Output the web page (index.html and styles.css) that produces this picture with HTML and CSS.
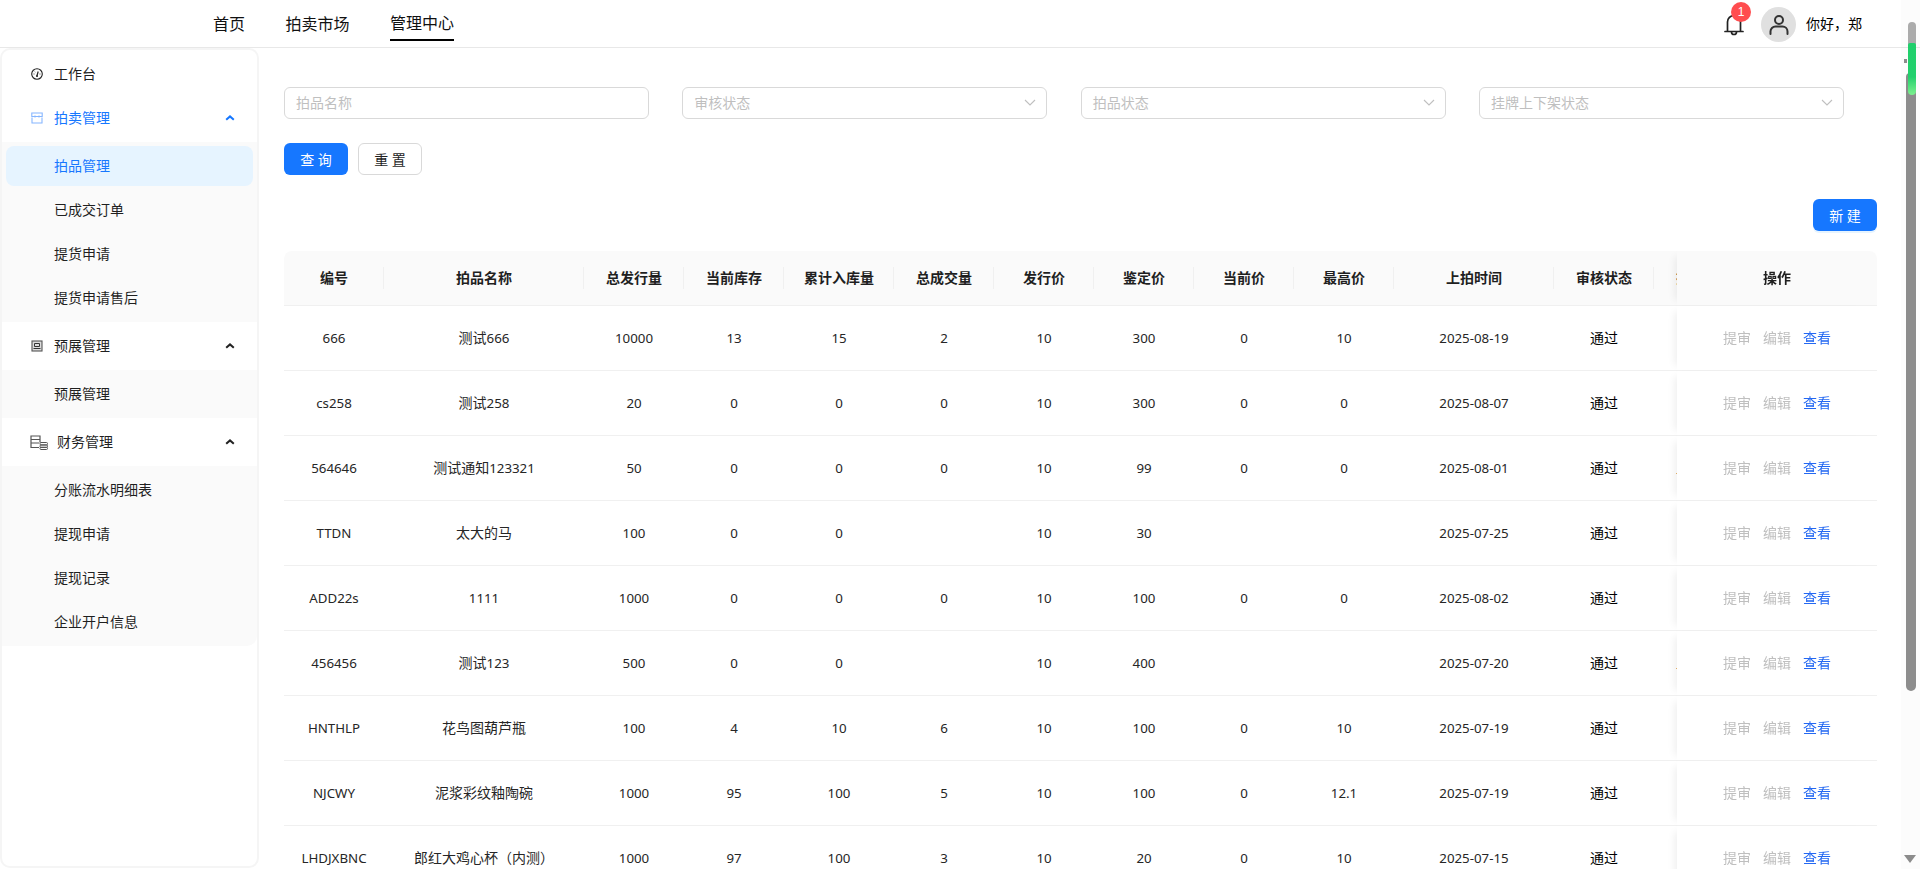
FILE: index.html
```html
<!DOCTYPE html>
<html lang="zh-CN">
<head>
<meta charset="utf-8">
<title>拍品管理</title>
<link rel="stylesheet" href="styles.css">
</head>
<body>
<header class="topbar">
  <nav class="topnav">
    <a class="topnav-item">首页</a>
    <a class="topnav-item">拍卖市场</a>
    <a class="topnav-item is-active">管理中心</a>
  </nav>
  <div class="userbox">
    <div class="bell">
      <svg class="bell-icon" viewBox="0 0 20 23" width="20" height="23"><path d="M1 18.5h18M3.5 18.5V9a6.5 6.5 0 0 1 13 0v9.500" fill="none" stroke="#222" stroke-width="1.700" stroke-linecap="round"/><path d="M7.500 19a2.500 2.500 0 0 0 5 0" fill="none" stroke="#222" stroke-width="1.700"/></svg>
      <span class="badge">1</span>
    </div>
    <div class="avatar">
      <svg viewBox="0 0 24 24" width="24" height="24"><circle cx="12" cy="7" r="4" fill="none" stroke="#333" stroke-width="2"/><path d="M3.500 21v-2.500a5 5 0 0 1 5-5h7a5 5 0 0 1 5 5V21" fill="none" stroke="#333" stroke-width="2" stroke-linecap="round"/></svg>
    </div>
    <span class="greeting">你好，郑</span>
  </div>
</header>

<div class="layout">
  <aside class="sidebar">
    <div class="menu-head menu-first">
      <svg class="mi" viewBox="0 0 12 12" width="12" height="12"><circle cx="6" cy="6" r="5.300" fill="none" stroke="#222" stroke-width="1.100"/><path d="M6 7.500 7.200 3.500" stroke="#222" stroke-width="1.200"/><circle cx="6" cy="8" r="1.100" fill="#222"/><path d="M2.500 6h1M8.500 6h1M3.700 3.500l.6.600" stroke="#222" stroke-width=".8"/></svg>
      <span>工作台</span>
    </div>

    <div class="menu-head is-open">
      <svg class="mi" viewBox="0 0 12 12" width="12" height="12"><path d="M1 5.500V11h10V5.500M.8 1h10.400v3.500H.8zM4 3.500v2M8 3.500v2" fill="none" stroke="#86b6ff" stroke-width="1.100"/></svg>
      <span>拍卖管理</span>
      <svg class="chev" viewBox="0 0 10 6" width="10" height="6"><path d="M1.200 4.800 5 1.400l3.800 3.400" fill="none" stroke="#1677ff" stroke-width="2"/></svg>
    </div>
    <ul class="submenu">
      <li class="sub-item is-active">拍品管理</li>
      <li class="sub-item">已成交订单</li>
      <li class="sub-item">提货申请</li>
      <li class="sub-item">提货申请售后</li>
    </ul>

    <div class="menu-head">
      <svg class="mi" viewBox="0 0 12 12" width="12" height="12"><rect x="1" y="1" width="10" height="10" fill="#dcdcdc" stroke="#555" stroke-width="1.100"/><path d="M3.500 3.500h5v3h-5zM2.500 8.500h7" fill="none" stroke="#333" stroke-width="1"/></svg>
      <span>预展管理</span>
      <svg class="chev" viewBox="0 0 10 6" width="10" height="6"><path d="M1.200 4.800 5 1.400l3.800 3.400" fill="none" stroke="#222" stroke-width="2"/></svg>
    </div>
    <ul class="submenu">
      <li class="sub-item">预展管理</li>
    </ul>

    <div class="menu-head menu-wide">
      <svg class="mi-wide" viewBox="0 0 18 15" width="18" height="15"><path d="M9 12.500H1V1h9v6.500M1 4.500h9M1 8h8" fill="none" stroke="#555" stroke-width="1.200"/><rect x="10" y="7.500" width="7.500" height="2.400" rx="1" fill="none" stroke="#555"/><rect x="10" y="10" width="7.500" height="2.400" rx="1" fill="none" stroke="#555"/><rect x="10" y="12.300" width="7.500" height="2.200" rx="1" fill="none" stroke="#555"/></svg>
      <span>财务管理</span>
      <svg class="chev" viewBox="0 0 10 6" width="10" height="6"><path d="M1.200 4.800 5 1.400l3.800 3.400" fill="none" stroke="#222" stroke-width="2"/></svg>
    </div>
    <ul class="submenu submenu-last">
      <li class="sub-item">分账流水明细表</li>
      <li class="sub-item">提现申请</li>
      <li class="sub-item">提现记录</li>
      <li class="sub-item">企业开户信息</li>
    </ul>
  </aside>

  <main class="content">
    <form class="filters">
      <input class="field field-input" type="text" placeholder="拍品名称">
      <div class="field field-select"><span>审核状态</span><svg viewBox="0 0 12 7" width="12" height="7"><path d="M1 1l5 5 5-5" fill="none" stroke="#bfbfbf" stroke-width="1.100"/></svg></div>
      <div class="field field-select"><span>拍品状态</span><svg viewBox="0 0 12 7" width="12" height="7"><path d="M1 1l5 5 5-5" fill="none" stroke="#bfbfbf" stroke-width="1.100"/></svg></div>
      <div class="field field-select"><span>挂牌上下架状态</span><svg viewBox="0 0 12 7" width="12" height="7"><path d="M1 1l5 5 5-5" fill="none" stroke="#bfbfbf" stroke-width="1.100"/></svg></div>
    </form>
    <div class="filter-actions">
      <button class="btn btn-primary" type="button">查 询</button>
      <button class="btn btn-default" type="button">重 置</button>
    </div>
    <div class="toolbar">
      <button class="btn btn-primary btn-raised" type="button">新 建</button>
    </div>
    <div class="table-wrap">
      <table class="grid">
        <colgroup>
          <col class="w100"><col class="w200"><col class="w100"><col class="w100"><col class="w110"><col class="w100"><col class="w100"><col class="w100"><col class="w100"><col class="w100"><col class="w160"><col class="w100"><col class="w100"><col class="w200">
        </colgroup>
        <thead>
          <tr>
            <th>编号</th><th>拍品名称</th><th>总发行量</th><th>当前库存</th><th>累计入库量</th><th>总成交量</th><th>发行价</th><th>鉴定价</th><th>当前价</th><th>最高价</th><th>上拍时间</th><th>审核状态</th><th>挂牌状态</th><th class="fixed">操作</th>
          </tr>
        </thead>
        <tbody>
          <tr><td>666</td><td class="cn">测试<span class="n">666</span></td><td>10000</td><td>13</td><td>15</td><td>2</td><td>10</td><td>300</td><td>0</td><td>10</td><td>2025-08-19</td><td class="cn pass">通过</td><td></td><td class="fixed"><span class="act off">提审</span><span class="act off">编辑</span><span class="act on">查看</span></td></tr>
          <tr><td>cs258</td><td class="cn">测试<span class="n">258</span></td><td>20</td><td>0</td><td>0</td><td>0</td><td>10</td><td>300</td><td>0</td><td>0</td><td>2025-08-07</td><td class="cn pass">通过</td><td></td><td class="fixed"><span class="act off">提审</span><span class="act off">编辑</span><span class="act on">查看</span></td></tr>
          <tr><td>564646</td><td class="cn">测试通知<span class="n">123321</span></td><td>50</td><td>0</td><td>0</td><td>0</td><td>10</td><td>99</td><td>0</td><td>0</td><td>2025-08-01</td><td class="cn pass">通过</td><td class="cn peek">上架</td><td class="fixed"><span class="act off">提审</span><span class="act off">编辑</span><span class="act on">查看</span></td></tr>
          <tr><td>TTDN</td><td class="cn">太大的马</td><td>100</td><td>0</td><td>0</td><td></td><td>10</td><td>30</td><td></td><td></td><td>2025-07-25</td><td class="cn pass">通过</td><td></td><td class="fixed"><span class="act off">提审</span><span class="act off">编辑</span><span class="act on">查看</span></td></tr>
          <tr><td>ADD22s</td><td>1111</td><td>1000</td><td>0</td><td>0</td><td>0</td><td>10</td><td>100</td><td>0</td><td>0</td><td>2025-08-02</td><td class="cn pass">通过</td><td></td><td class="fixed"><span class="act off">提审</span><span class="act off">编辑</span><span class="act on">查看</span></td></tr>
          <tr><td>456456</td><td class="cn">测试<span class="n">123</span></td><td>500</td><td>0</td><td>0</td><td></td><td>10</td><td>400</td><td></td><td></td><td>2025-07-20</td><td class="cn pass">通过</td><td class="cn peek">上架</td><td class="fixed"><span class="act off">提审</span><span class="act off">编辑</span><span class="act on">查看</span></td></tr>
          <tr><td>HNTHLP</td><td class="cn">花鸟图葫芦瓶</td><td>100</td><td>4</td><td>10</td><td>6</td><td>10</td><td>100</td><td>0</td><td>10</td><td>2025-07-19</td><td class="cn pass">通过</td><td></td><td class="fixed"><span class="act off">提审</span><span class="act off">编辑</span><span class="act on">查看</span></td></tr>
          <tr><td>NJCWY</td><td class="cn">泥浆彩纹釉陶碗</td><td>1000</td><td>95</td><td>100</td><td>5</td><td>10</td><td>100</td><td>0</td><td>12.1</td><td>2025-07-19</td><td class="cn pass">通过</td><td></td><td class="fixed"><span class="act off">提审</span><span class="act off">编辑</span><span class="act on">查看</span></td></tr>
          <tr><td>LHDJXBNC</td><td class="cn">郎红大鸡心杯（内测）</td><td>1000</td><td>97</td><td>100</td><td>3</td><td>10</td><td>20</td><td>0</td><td>10</td><td>2025-07-15</td><td class="cn pass">通过</td><td></td><td class="fixed"><span class="act off">提审</span><span class="act off">编辑</span><span class="act on">查看</span></td></tr>
        </tbody>
      </table>
    </div>
  </main>
</div>

<div class="scrollbar" aria-hidden="true">
  <div class="sb-ghost"></div>
  <div class="sb-nub"></div>
  <div class="sb-thumb"></div>
  <div class="sb-green"></div>
  <div class="sb-arrow"></div>
</div>
</body>
</html>
```

FILE: styles.css
```css
* { box-sizing: border-box; }

html, body {
  margin: 0;
  height: 100%;
  overflow: hidden;
}

body {
  display: flex;
  flex-direction: column;
  position: relative;
  background: #fff;
  color: #1f1f1f;
  font-family: "Noto Sans", "Noto Sans CJK SC", sans-serif;
  font-size: 14px;
}

/* top bar */
.topbar {
  flex: none;
  height: 48px;
  display: flex;
  justify-content: space-between;
  padding: 0 58px 0 213px;
  border-bottom: 1px solid #e8e8e8;
}

.topnav {
  display: flex;
  gap: 40.5px;
  align-items: flex-start;
}

.topnav-item {
  height: 41px;
  padding-top: 13px;
  font-size: 16px;
  line-height: 22px;
  color: #111;
  border-bottom: 2px solid transparent;
}

.topnav-item.is-active {
  padding-top: 12px;
  border-bottom-color: #000;
}

.userbox {
  display: flex;
  align-items: flex-start;
}

.bell {
  position: relative;
  width: 20px;
  height: 23px;
  margin-top: 13px;
}

.bell-icon { display: block; }

.badge {
  position: absolute;
  left: 7px;
  top: -11px;
  width: 20px;
  height: 20px;
  border-radius: 50%;
  background: #ff4d4f;
  color: #fff;
  font-family: "Liberation Sans", sans-serif;
  font-size: 12px;
  line-height: 20px;
  text-align: center;
}

.avatar {
  width: 35px;
  height: 35px;
  margin: 7px 0 0 17px;
  border-radius: 50%;
  background: #e0e0e0;
  display: flex;
  align-items: center;
  justify-content: center;
}

.greeting {
  margin: 13px 0 0 10px;
  line-height: 22px;
  color: #000;
}

/* layout */
.layout {
  flex: 1;
  min-height: 0;
  display: flex;
}

/* sidebar */
.sidebar {
  flex: none;
  width: 259px;
  height: 820px;
  border: 2px solid #f5f5f5;
  border-radius: 10px;
  background: #fff;
  overflow: hidden;
}

.menu-head {
  display: flex;
  align-items: center;
  height: 48px;
  padding: 0 22px 0 29px;
  color: #1f1f1f;
  line-height: 22px;
}

.menu-first {
  height: 44px;
  padding-top: 4px;
}

.menu-head.is-open { color: #1677ff; }

.mi {
  flex: none;
  margin-right: 11px;
}

.mi-wide {
  flex: none;
  margin-right: 9px;
  margin-left: -1px;
}

.chev {
  flex: none;
  margin-left: auto;
}

.submenu {
  list-style: none;
  margin: 0;
  padding: 4px 0;
  display: flex;
  flex-direction: column;
  gap: 4px;
  background: #fafafa;
}

.submenu-last { border-radius: 0 0 10px 0; }

.sub-item {
  height: 40px;
  margin: 0 4px;
  padding-left: 48px;
  line-height: 40px;
  border-radius: 8px;
  color: #1f1f1f;
}

.sub-item.is-active {
  background: #e6f4ff;
  color: #1677ff;
}

/* content */
.content {
  flex: 1;
  min-width: 0;
  padding: 39px 43px 0 25px;
}

.filters {
  display: grid;
  grid-template-columns: repeat(4, 365px);
  column-gap: 33.33px;
}

.field {
  height: 32px;
  border: 1px solid #d9d9d9;
  border-radius: 6px;
  background: #fff;
  padding: 0 11px 2px;
  font: inherit;
  color: #bfbfbf;
}

.field-input { width: 100%; outline: none; }
.field-input::placeholder { color: #bfbfbf; opacity: 1; }

.field-select {
  display: flex;
  align-items: center;
  justify-content: space-between;
  padding-right: 10px;
}

.filter-actions {
  display: flex;
  gap: 10px;
  margin-top: 24px;
}

.btn {
  width: 64px;
  height: 32px;
  padding: 0;
  border-radius: 6px;
  font: inherit;
  cursor: pointer;
}

.btn-primary {
  border: 0;
  background: #1677ff;
  color: #fff;
}

.btn-default {
  border: 1px solid #d9d9d9;
  background: #fff;
  color: #1f1f1f;
}

.btn-raised { box-shadow: 0 2px 0 rgba(5, 145, 255, .1); }

.toolbar {
  display: flex;
  justify-content: flex-end;
  margin-top: 24px;
}

/* table */
.table-wrap {
  margin-top: 20px;
  overflow: hidden;
  border-radius: 8px 8px 0 0;
}

.grid {
  width: 1669px;
  table-layout: fixed;
  border-collapse: separate;
  border-spacing: 0;
}

.w100 { width: 100px; }
.w110 { width: 110px; }
.w160 { width: 160px; }
.w200 { width: 200px; }

.grid th {
  position: relative;
  height: 55px;
  padding: 0 0 2px;
  background: #fafafa;
  border-bottom: 1px solid #f0f0f0;
  font-size: 14px;
  font-weight: 600;
  color: #1f1f1f;
  text-align: center;
  white-space: nowrap;
}

.grid th::before {
  content: "";
  position: absolute;
  right: 0;
  top: 50%;
  width: 1px;
  height: 22px;
  margin-top: -11px;
  background: #f0f0f0;
}

.grid td {
  height: 65px;
  padding: 0;
  border-bottom: 1px solid #f0f0f0;
  background: #fff;
  font-size: 13.3px;
  color: #262626;
  text-align: center;
  white-space: nowrap;
}

.grid td.cn {
  padding-bottom: 2px;
  font-size: 14px;
}

.grid .n { font-size: 13.3px; }
.grid td.pass { color: #000; }

.grid td.peek {
  padding-left: 22px;
  text-align: left;
}

.grid .fixed {
  position: sticky;
  right: 0;
  z-index: 1;
  box-shadow: -8px 0 8px -6px rgba(5, 5, 5, .07);
}

.grid th.fixed::before { display: none; }

.grid td.fixed {
  padding-bottom: 2px;
  font-size: 14px;
}

.act { margin: 0 6px; }
.act.off { color: #bfbfbf; }
.act.on { color: #2468f2; }

/* window scrollbar, drawn over the page */
.scrollbar {
  position: absolute;
  top: 0;
  right: 0;
  bottom: 0;
  width: 19px;
  background: rgba(0, 0, 0, .012);
}

.sb-ghost {
  position: absolute;
  left: 7px;
  top: 22px;
  width: 8px;
  height: 60px;
  border-radius: 4px 4px 0 0;
  background: #ababab;
}

.sb-nub {
  position: absolute;
  left: 3px;
  top: 59px;
  width: 3px;
  height: 4px;
  background: #8c8c8c;
}

.sb-thumb {
  position: absolute;
  left: 5px;
  top: 73px;
  width: 10px;
  height: 618px;
  border-radius: 4px 0 5px 5px;
  background: #8c8c8c;
}

.sb-green {
  position: absolute;
  left: 7px;
  top: 43px;
  width: 8px;
  height: 52px;
  border-radius: 2px 2px 4px 4px;
  background: linear-gradient(#1fcf6b, #22d06c 65%, #7cf08e);
}

.sb-arrow {
  position: absolute;
  left: 3px;
  top: 855px;
  width: 0;
  height: 0;
  border-left: 6px solid transparent;
  border-right: 6px solid transparent;
  border-top: 8px solid #8c8c8c;
}
```
